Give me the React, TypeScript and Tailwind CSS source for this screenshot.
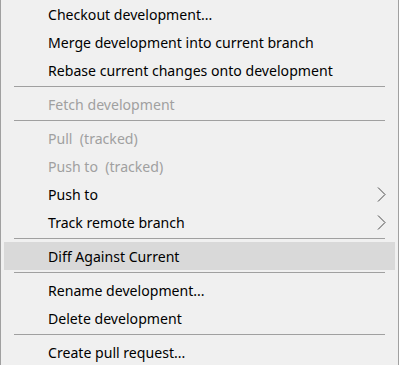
import React from "react";

type Item =
  | { kind: "item"; label: string; disabled?: boolean; sub?: boolean; hl?: boolean }
  | { kind: "sep" };

const items: Item[] = [
  { kind: "item", label: "Checkout development..." },
  { kind: "item", label: "Merge development into current branch" },
  { kind: "item", label: "Rebase current changes onto development" },
  { kind: "sep" },
  { kind: "item", label: "Fetch development", disabled: true },
  { kind: "sep" },
  { kind: "item", label: "Pull  (tracked)", disabled: true },
  { kind: "item", label: "Push to  (tracked)", disabled: true },
  { kind: "item", label: "Push to", sub: true },
  { kind: "item", label: "Track remote branch", sub: true },
  { kind: "sep" },
  { kind: "item", label: "Diff Against Current", hl: true },
  { kind: "sep" },
  { kind: "item", label: "Rename development..." },
  { kind: "item", label: "Delete development" },
  { kind: "sep" },
  { kind: "item", label: "Create pull request..." },
];

function Chevron() {
  return (
    <svg width="9" height="15" viewBox="0 0 9 15" className="block">
      <path d="M1 0.5 L8 7.5 L1 14.5" fill="none" stroke="#4a4a4a" strokeWidth="1" />
    </svg>
  );
}

export default function App() {
  return (
    <div
      className="w-[399px] h-[365px] overflow-hidden bg-[#f0f0f0] border-l border-r border-[#a0a0a0] pr-[3px] pl-[3px] flex flex-col"
      style={{ fontFamily: '"Noto Sans", "Open Sans", sans-serif' }}
    >
      {items.map((it, i) =>
        it.kind === "sep" ? (
          <div key={i} className="h-[6px] shrink-0 flex items-start pt-[2px] pl-[10px] pr-[10px]">
            <div className="h-px w-full bg-[#a0a0a0]" />
          </div>
        ) : (
          <div
            key={i}
            className={`h-[28px] shrink-0 flex items-center pl-[44px] pr-[9px] whitespace-pre text-[14.1px] ${
              it.hl ? "bg-[#d9d9d9]" : ""
            } ${it.disabled ? "text-[#a0a0a0]" : "text-black"}`}
          >
            <span className="flex-1 leading-none pt-[2px]">{it.label}</span>
            {it.sub ? <Chevron /> : null}
          </div>
        )
      )}
    </div>
  );
}
